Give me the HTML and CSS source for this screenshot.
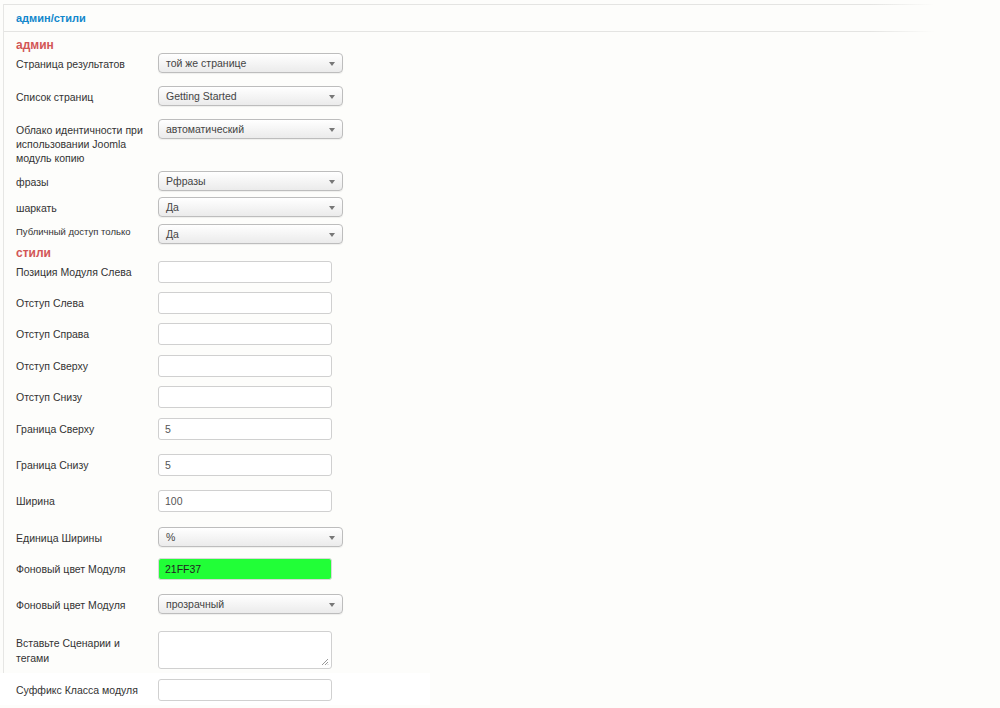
FILE: index.html
```html
<!DOCTYPE html>
<html>
<head>
<meta charset="utf-8">
<link rel="stylesheet" href="styles.css">
</head>
<body>
<div class="panel">
  <div class="panel-head"><span class="panel-title">админ/стили</span></div>
  <div class="panel-body">
    <h3 class="group first">админ</h3>
    <div class="row s33"><label class="lbl">Страница результатов</label><div class="select">той же странице</div></div>
    <div class="row s33"><label class="lbl">Список страниц</label><div class="select">Getting Started</div></div>
    <div class="row s52"><label class="lbl">Облако идентичности при использовании Joomla модуль копию</label><div class="select">автоматический</div></div>
    <div class="row s26"><label class="lbl">фразы</label><div class="select">Рфразы</div></div>
    <div class="row s27"><label class="lbl">шаркать</label><div class="select">Да</div></div>
    <div class="row s22"><label class="lbl small">Публичный доступ только</label><div class="select">Да</div></div>
    <h3 class="group">стили</h3>
    <div class="row s31"><label class="lbl tx">Позиция Модуля Слева</label><div class="input"></div></div>
    <div class="row s31"><label class="lbl tx">Отступ Слева</label><div class="input"></div></div>
    <div class="row s32"><label class="lbl tx">Отступ Справа</label><div class="input"></div></div>
    <div class="row s31"><label class="lbl tx">Отступ Сверху</label><div class="input"></div></div>
    <div class="row s32"><label class="lbl tx">Отступ Снизу</label><div class="input"></div></div>
    <div class="row s36"><label class="lbl tx">Граница Сверху</label><div class="input">5</div></div>
    <div class="row s36"><label class="lbl tx">Граница Снизу</label><div class="input">5</div></div>
    <div class="row s37"><label class="lbl tx">Ширина</label><div class="input">100</div></div>
    <div class="row s31"><label class="lbl">Единица Ширины</label><div class="select">%</div></div>
    <div class="row s36"><label class="lbl tx">Фоновый цвет Модуля</label><div class="input green">21FF37</div></div>
    <div class="row s37"><label class="lbl">Фоновый цвет Модуля</label><div class="select">прозрачный</div></div>
    <div class="row last"><label class="lbl ta">Вставьте Сценарии и тегами</label><div class="textarea"><svg class="grip" width="8" height="8" viewBox="0 0 8 8"><path d="M7 1L1 7M7 4L4 7M7 6.5L6.5 7" stroke="#999" stroke-width="1"/></svg></div></div>
  </div>
</div>
<div class="tail">
  <div class="row"><label class="lbl tx">Суффикс Класса модуля</label><div class="input"></div></div>
</div>
</body>
</html>
```

FILE: styles.css
```css
html, body {
  margin: 0;
  padding: 0;
  background: #fdfdfb;
  font-family: "Liberation Sans", Arial, sans-serif;
  color: #333;
}
.panel {
  margin: 4px 0 0 3px;
  width: 930px;
  border-left: 1px solid #e6e6e4;
}
.panel-head {
  height: 26px;
  border-top: 1px solid #e6e6e4;
  border-bottom: 1px solid #e4e4e2;
  border-image: linear-gradient(to right, #e4e4e2 93%, rgba(228,228,226,0)) 1;
  border-left: none;
  border-right: none;
  display: flex;
  align-items: center;
  padding-left: 12px;
}
.panel-title {
  font-size: 11px;
  font-weight: bold;
  color: #1287cc;
}
.panel-body {
  padding: 0 0 1px 12px;
}
.group {
  margin: 0;
  font-size: 12px;
  font-weight: bold;
  color: #d25656;
  line-height: 14px;
  height: 15px;
}
.group.first {
  margin-top: 6px;
  height: 15px;
}
.row {
  display: flex;
  align-items: flex-start;
}
.s22 { height: 22px; }
.s26 { height: 26px; }
.s27 { height: 27px; }
.s31 { height: 31px; }
.s32 { height: 32px; }
.s33 { height: 33px; }
.s36 { height: 36px; }
.s37 { height: 37px; }
.s52 { height: 52px; }
.row.last { height: 41px; }
.lbl {
  width: 142px;
  flex: none;
  font-size: 10.5px;
  line-height: 14px;
  padding-top: 4px;
  padding-right: 8px;
  box-sizing: border-box;
  color: #333;
}
.lbl.small { font-size: 9.5px; padding-top: 1px; }
.lbl.tx { padding-top: 4px; }
.lbl.ta { padding-top: 5px; line-height: 15px; }
.select {
  width: 185px;
  height: 20px;
  box-sizing: border-box;
  border: 1px solid #bdbdbd;
  border-radius: 4px;
  background: linear-gradient(#ffffff, #ebebeb);
  box-shadow: 0 1px 1px rgba(0,0,0,0.06);
  font-size: 10.5px;
  line-height: 18px;
  padding-left: 7px;
  color: #444;
  position: relative;
}
.select::after {
  content: "";
  position: absolute;
  right: 7px;
  top: 8px;
  border-left: 3.5px solid transparent;
  border-right: 3.5px solid transparent;
  border-top: 4px solid #777;
}
.input {
  width: 174px;
  height: 22px;
  box-sizing: border-box;
  border: 1px solid #d0d0d0;
  border-radius: 3px;
  background: #fff;
  font-size: 10.5px;
  line-height: 20px;
  padding-left: 6px;
  color: #555;
}
.input.green {
  background: #21ff37;
  border-color: #d8d8d8;
  color: #222;
}
.textarea {
  width: 174px;
  height: 38px;
  box-sizing: border-box;
  border: 1px solid #d0d0d0;
  border-radius: 3px;
  background: #fff;
  position: relative;
}
.grip {
  position: absolute;
  right: 2px;
  bottom: 2px;
}
.tail {
  width: 430px;
  box-sizing: border-box;
  background: #fff;
  padding: 6px 0 0 16px;
  height: 32px;
}
```
